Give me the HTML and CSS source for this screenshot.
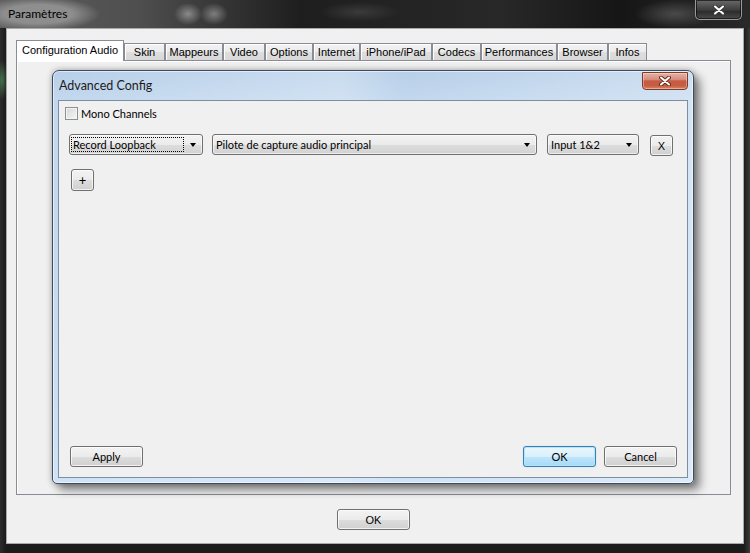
FILE: index.html
```html
<!DOCTYPE html>
<html lang="fr">

<head>
    <meta charset="UTF-8" />
    <meta name="viewport" content="width=device-width, initial-scale=1.0" />
    <link rel="stylesheet" href="styles.css">
</head>

<body>
    <div class="window">
        <div class="titlebar">
            <span class="title">Paramètres</span>
            <div class="win-close">
                <svg width="12" height="10" viewBox="0 0 12 10">
                    <path d="M2 1.5 L10 8.5 M10 1.5 L2 8.5" stroke="#3a3a3a" stroke-width="4" stroke-linecap="round" />
                    <path d="M2 1.5 L10 8.5 M10 1.5 L2 8.5" stroke="#ffffff" stroke-width="2" stroke-linecap="round" />
                </svg>
            </div>
        </div>

        <div class="client">
            <div class="tabs">
                <div class="tab active">Configuration Audio</div>
                <div class="tab w-skin">Skin</div>
                <div class="tab w-mappeurs">Mappeurs</div>
                <div class="tab w-video">Video</div>
                <div class="tab w-options">Options</div>
                <div class="tab w-internet">Internet</div>
                <div class="tab w-iphone">iPhone/iPad</div>
                <div class="tab w-codecs">Codecs</div>
                <div class="tab w-perf">Performances</div>
                <div class="tab w-browser">Browser</div>
                <div class="tab w-infos">Infos</div>
            </div>

            <div class="tab-panel">
                <!-- child dialog -->
                <div class="dialog">
                    <div class="dlg-title">
                        <span class="dlg-caption">Advanced Config</span>
                        <div class="dlg-close">
                            <svg width="12" height="10" viewBox="0 0 12 10">
                                <path d="M2 1.5 L10 8.5 M10 1.5 L2 8.5" stroke="#6b2a1d" stroke-width="4" stroke-linecap="round" />
                                <path d="M2 1.5 L10 8.5 M10 1.5 L2 8.5" stroke="#ffffff" stroke-width="2" stroke-linecap="round" />
                            </svg>
                        </div>
                    </div>

                    <div class="dlg-client">
                        <label class="check-row">
                            <span class="checkbox"></span>
                            <span>Mono Channels</span>
                        </label>

                        <div class="combo-row">
                            <div class="combo combo-source">
                                <span class="focus-rect">Record Loopback</span>
                                <span class="arrow"></span>
                            </div>
                            <div class="combo combo-driver">
                                <span class="combo-text">Pilote de capture audio principal</span>
                                <span class="arrow"></span>
                            </div>
                            <div class="combo combo-input">
                                <span class="combo-text">Input 1&amp;2</span>
                                <span class="arrow"></span>
                            </div>
                            <button class="btn btn-remove">X</button>
                        </div>

                        <button class="btn btn-add">+</button>

                        <div class="dlg-buttons">
                            <button class="btn btn-dlg">Apply</button>
                            <button class="btn btn-dlg btn-default">OK</button>
                            <button class="btn btn-dlg btn-cancel">Cancel</button>
                        </div>
                    </div>
                </div>
            </div>

            <div class="footer">
                <button class="btn btn-ok">OK</button>
            </div>
        </div>
    </div>
</body>

</html>
```

FILE: styles.css
```css
* {
    box-sizing: border-box;
}

body {
    margin: 0;
    background-color: #151515;
}

.window {
    width: 750px;
    height: 553px;
    overflow: hidden;
    display: flex;
    flex-direction: column;
    font-family: "Segoe UI", Lato, "Noto Sans", sans-serif;
    background:
        radial-gradient(ellipse 6px 20px at 2px 80px, rgba(90, 160, 100, 0.6), transparent),
        linear-gradient(90deg, #2c2c2c 0, #1b1b1b 6px, #1b1b1b 744px, #3a3a3a 750px);
}

/* outer window caption */
.titlebar {
    height: 28px;
    flex-shrink: 0;
    display: flex;
    align-items: flex-start;
    padding-left: 8px;
    background:
        radial-gradient(ellipse 14px 11px at 188px 14px, #8a8a8a, transparent),
        radial-gradient(ellipse 14px 11px at 214px 14px, #7e7e7e, transparent),
        radial-gradient(ellipse 40px 10px at 360px 12px, #3a3a3a, transparent),
        radial-gradient(ellipse 40px 14px at 675px 14px, #4a4a4a, transparent),
        radial-gradient(ellipse 62px 17px at 38px 14px, #8e8e8e 55%, rgba(142, 142, 142, 0) 100%),
        linear-gradient(90deg, #5e5e5e 0, #4e4e4e 140px, #333333 230px, #1e1e1e 300px, #282828 500px, #161616 620px, #2a2a2a 750px);
}

.title {
    font-size: 12px;
    line-height: 28px;
    color: #000;
}

.win-close {
    margin-left: auto;
    margin-right: 8px;
    width: 47px;
    height: 20px;
    display: flex;
    align-items: center;
    justify-content: center;
    border: 1px solid #9a9a9a;
    border-top: none;
    border-radius: 0 0 5px 5px;
    background: linear-gradient(#6a6a6a, #3a3a3a 55%, #2c2c2c 60%, #4a4a4a);
    box-shadow: inset 0 0 0 1px rgba(0, 0, 0, 0.6);
}

/* client area */
.client {
    margin-left: 6px;
    width: 738px;
    height: 516px;
    display: flex;
    flex-direction: column;
    background-color: #f0f0f0;
    border: 1px solid #a9a9a9;
}

.tabs {
    display: flex;
    align-items: flex-end;
    height: 20px;
    margin-top: 11px;
    margin-left: 9px;
    font-family: Tahoma, "Liberation Sans", sans-serif;
    font-size: 11px;
}

.tab {
    height: 17px;
    line-height: 16px;
    text-align: center;
    color: #000;
    border: 1px solid #898c95;
    border-bottom: none;
    background: linear-gradient(#f3f3f3, #ebebeb 50%, #dedede 51%, #d8d8d8);
    box-shadow: inset 1px 1px 0 #ffffff;
}

.tab.active {
    position: relative;
    z-index: 1;
    width: 108px;
    height: 21px;
    margin-bottom: -1px;
    line-height: 18px;
    background: #ffffff;
    box-shadow: none;
}

.w-skin { width: 41px; }
.w-mappeurs { width: 58px; }
.w-video { width: 42px; }
.w-options { width: 48px; }
.w-internet { width: 47px; }
.w-iphone { width: 72px; }
.w-codecs { width: 49px; }
.w-perf { width: 76px; }
.w-browser { width: 51px; }
.w-infos { width: 39px; }

.tab-panel {
    margin-left: 9px;
    width: 715px;
    height: 435px;
    border: 1px solid #898c95;
    background-color: #f0f0f0;
    box-shadow: inset 1px 1px 0 #ffffff;
    padding: 9px 0 0 35px;
}

/* Advanced Config dialog */
.dialog {
    width: 642px;
    height: 414px;
    display: flex;
    flex-direction: column;
    padding: 0 5px 5px 5px;
    border: 1px solid #3b4c5f;
    border-radius: 7px 7px 5px 5px;
    background:
        linear-gradient(90deg, rgba(255, 255, 255, 0) 0, rgba(255, 255, 255, 0.25) 45%, rgba(255, 255, 255, 0) 55%, rgba(255, 255, 255, 0.3) 100%),
        linear-gradient(#b7cfe9, #c3d8ee 30px, #c6dbf1 60%, #cfe2f6);
    box-shadow: inset 0 0 0 1px rgba(255, 255, 255, 0.55), 6px 6px 10px rgba(0, 0, 0, 0.45), 0 0 6px rgba(0, 0, 0, 0.3);
}

.dlg-title {
    height: 29px;
    display: flex;
    align-items: flex-start;
}

.dlg-caption {
    padding-left: 1px;
    font-size: 12.5px;
    line-height: 29px;
    color: #1b1b1b;
}

.dlg-close {
    margin-left: auto;
    margin-top: 1px;
    width: 46px;
    height: 18px;
    display: flex;
    align-items: center;
    justify-content: center;
    border: 1px solid #7d3b2c;
    border-radius: 0 0 4px 4px;
    background: linear-gradient(#e6b0a4, #d68f7f 40%, #c65a42 50%, #c75d40 80%, #d9876a);
    box-shadow: inset 0 0 0 1px rgba(255, 255, 255, 0.35);
}

.dlg-client {
    flex: 1;
    display: flex;
    flex-direction: column;
    align-items: flex-start;
    border: 1px solid #7c8ea1;
    background-color: #f0f0f0;
    font-size: 11px;
    color: #000;
}

.check-row {
    display: flex;
    align-items: center;
    height: 13px;
    margin-top: 6px;
    margin-left: 6px;
    gap: 3px;
}

.checkbox {
    width: 13px;
    height: 13px;
    border: 1px solid #8e8f8f;
    background: linear-gradient(135deg, #d3d6db, #f7f7f7);
    box-shadow: inset 0 0 0 1px #f4f4f4;
}

.combo-row {
    display: flex;
    align-items: flex-start;
    margin-top: 14px;
    margin-left: 10px;
}

.combo {
    height: 21px;
    display: flex;
    align-items: center;
    padding: 0 6px 0 3px;
    border: 1px solid #707070;
    border-radius: 3px;
    background: linear-gradient(#f3f3f3, #ebebeb 50%, #dddddd 51%, #d2d2d2);
    box-shadow: inset 0 0 0 1px rgba(255, 255, 255, 0.6);
    white-space: nowrap;
}

.combo-source {
    width: 134px;
    padding-left: 1px;
}

.combo-driver {
    width: 325px;
    margin-left: 9px;
}

.combo-input {
    width: 92px;
    margin-left: 10px;
}

.focus-rect {
    width: 113px;
    height: 15px;
    line-height: 13px;
    padding-left: 1px;
    border: 1px dotted #000;
}

.arrow {
    margin-left: auto;
    width: 0;
    height: 0;
    border-left: 3.5px solid transparent;
    border-right: 3.5px solid transparent;
    border-top: 4px solid #000;
}

.btn {
    padding: 0;
    border: 1px solid #707070;
    border-radius: 3px;
    background: linear-gradient(#f3f3f3, #ebebeb 50%, #dddddd 51%, #d0d0d0);
    box-shadow: inset 0 0 0 1px rgba(255, 255, 255, 0.7);
    font-family: "Segoe UI", Lato, "Noto Sans", sans-serif;
    font-size: 11px;
    color: #000;
}

.btn-remove {
    width: 23px;
    height: 21px;
    margin-left: 11px;
    margin-top: 1px;
    font-family: Tahoma, "Liberation Sans", sans-serif;
    font-size: 11px;
}

.btn-add {
    width: 23px;
    height: 22px;
    margin-top: 13px;
    margin-left: 12px;
    font-size: 13px;
}

.dlg-buttons {
    margin-top: auto;
    margin-bottom: 10px;
    width: 100%;
    display: flex;
    padding: 0 10px 0 11px;
}

.btn-dlg {
    width: 73px;
    height: 21px;
}

.btn-default {
    margin-left: auto;
    border-color: #3c7fb1;
    background: linear-gradient(#eaf6fd, #d9f0fc 50%, #bee6fd 51%, #a7d9f5);
    box-shadow: inset 0 0 0 1px #b3e6f8, 0 0 1px #6fc6ef;
}

.btn-cancel {
    margin-left: 8px;
}

.footer {
    display: flex;
    justify-content: center;
    margin-top: 14px;
    padding-right: 3px;
}

.btn-ok {
    width: 73px;
    height: 21px;
    font-family: Tahoma, "Liberation Sans", sans-serif;
    font-size: 11px;
}
```
